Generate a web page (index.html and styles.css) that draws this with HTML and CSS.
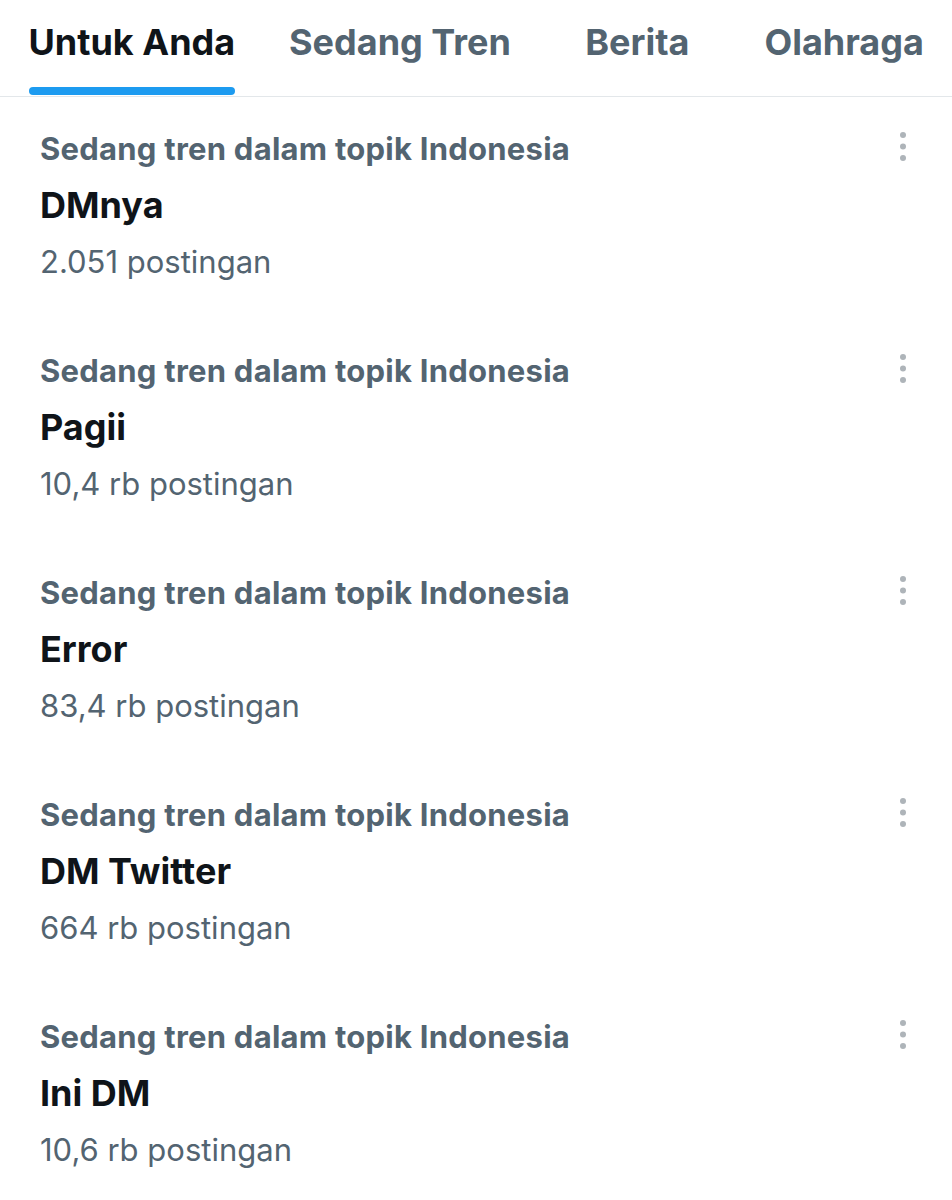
FILE: index.html
```html
<!DOCTYPE html>
<html lang="id">
<head>
<meta charset="utf-8">
<title>Jelajahi</title>
<link rel="stylesheet" href="styles.css">
</head>
<body>
<nav class="tabs">
  <div class="tab tab-active"><span class="tab-inner"><span class="tab-label">Untuk Anda</span><span class="tab-bar"></span></span></div>
  <div class="tab"><span class="tab-inner"><span class="tab-label">Sedang Tren</span><span class="tab-bar"></span></span></div>
  <div class="tab"><span class="tab-inner"><span class="tab-label">Berita</span><span class="tab-bar"></span></span></div>
  <div class="tab"><span class="tab-inner"><span class="tab-label">Olahraga</span><span class="tab-bar"></span></span></div>
</nav>
<main class="trends">
  <div class="trend">
    <div class="trend-text">
      <div class="trend-cat">Sedang tren dalam topik Indonesia</div>
      <div class="trend-title">DMnya</div>
      <div class="trend-count">2.051 postingan</div>
    </div>
    <svg class="more" viewBox="0 0 12 36" width="12" height="36"><circle cx="6" cy="6" r="3"/><circle cx="6" cy="17.5" r="3"/><circle cx="6" cy="29" r="3"/></svg>
  </div>
  <div class="trend">
    <div class="trend-text">
      <div class="trend-cat">Sedang tren dalam topik Indonesia</div>
      <div class="trend-title">Pagii</div>
      <div class="trend-count">10,4 rb postingan</div>
    </div>
    <svg class="more" viewBox="0 0 12 36" width="12" height="36"><circle cx="6" cy="6" r="3"/><circle cx="6" cy="17.5" r="3"/><circle cx="6" cy="29" r="3"/></svg>
  </div>
  <div class="trend">
    <div class="trend-text">
      <div class="trend-cat">Sedang tren dalam topik Indonesia</div>
      <div class="trend-title">Error</div>
      <div class="trend-count">83,4 rb postingan</div>
    </div>
    <svg class="more" viewBox="0 0 12 36" width="12" height="36"><circle cx="6" cy="6" r="3"/><circle cx="6" cy="17.5" r="3"/><circle cx="6" cy="29" r="3"/></svg>
  </div>
  <div class="trend">
    <div class="trend-text">
      <div class="trend-cat">Sedang tren dalam topik Indonesia</div>
      <div class="trend-title">DM Twitter</div>
      <div class="trend-count">664 rb postingan</div>
    </div>
    <svg class="more" viewBox="0 0 12 36" width="12" height="36"><circle cx="6" cy="6" r="3"/><circle cx="6" cy="17.5" r="3"/><circle cx="6" cy="29" r="3"/></svg>
  </div>
  <div class="trend">
    <div class="trend-text">
      <div class="trend-cat">Sedang tren dalam topik Indonesia</div>
      <div class="trend-title">Ini DM</div>
      <div class="trend-count">10,6 rb postingan</div>
    </div>
    <svg class="more" viewBox="0 0 12 36" width="12" height="36"><circle cx="6" cy="6" r="3"/><circle cx="6" cy="17.5" r="3"/><circle cx="6" cy="29" r="3"/></svg>
  </div>
</main>
</body>
</html>
```
FILE: styles.css
```css
* { box-sizing: border-box; }
html, body {
  margin: 0;
  padding: 0;
  background: #ffffff;
}
body {
  font-family: Inter, "Noto Sans", sans-serif;
  color: #0f1419;
  width: 952px;
  overflow: hidden;
}
.tabs {
  display: flex;
  padding-top: 20px;
  padding-bottom: 1px;
  border-bottom: 1px solid #e3e7ea;
}
.tab {
  display: flex;
  justify-content: center;
  padding: 0 30px;
  min-width: 198px;
}
.tab:first-child { padding-left: 31px; padding-right: 29px; }
.tab-inner {
  display: inline-flex;
  flex-direction: column;
}
.tab-label {
  font-size: 36px;
  font-weight: 700;
  line-height: 44px;
  color: #536471;
  white-space: nowrap;
}
.tab-bar {
  margin-top: 23px;
  height: 8px;
  border-radius: 4px;
  background: transparent;
}
.tab-active .tab-label { color: #0f1419; }
.tab-active .tab-bar { background: #1d9bf0; }

.trend {
  display: flex;
  justify-content: space-between;
  align-items: flex-start;
  padding: 27px 43px 0 40px;
  height: 222px;
}
.trend-text {
  display: flex;
  flex-direction: column;
}
.trend-cat {
  font-size: 31px;
  line-height: 50px;
  font-weight: 700;
  letter-spacing: 0.25px;
  color: #536471;
}
.trend-title {
  font-size: 36px;
  line-height: 62px;
  font-weight: 700;
  color: #0f1419;
}
.trend-count {
  font-size: 31px;
  line-height: 52px;
  font-weight: 400;
  color: #536471;
}
.more {
  fill: #aeb4b9;
  margin-top: 5px;
}
```
